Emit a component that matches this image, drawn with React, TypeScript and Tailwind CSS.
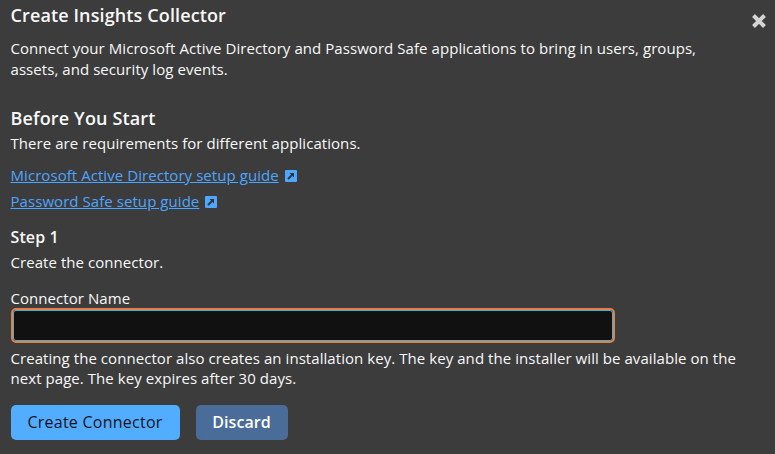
export default function App() {
  return (
    <div className="relative w-[775px] h-[454px] overflow-hidden bg-[#3c3c3c] px-[10.5px] text-[#f8f8f8] text-[15px] leading-[21px] tracking-[0.06px] font-['Open_Sans',sans-serif]">
      <svg className="absolute left-[751px] top-[13px]" width="16" height="16" viewBox="0 0 16 16">
        <path d="M2.5 2.5 L13.5 13.5 M13.5 2.5 L2.5 13.5" stroke="#d4d4d4" strokeWidth="4" />
      </svg>
      <h1 className="pt-[3px] text-[18px] leading-[24px] font-semibold tracking-[0.12px]">Create Insights Collector</h1>
      <p className="mt-[11px] w-[730px]">
        Connect your Microsoft Active Directory and Password Safe applications to bring in users, groups, assets, and security log events.
      </p>
      <h2 className="mt-[26px] text-[18px] leading-[24px] font-semibold tracking-[0.15px]">Before You Start</h2>
      <p className="mt-[3px]">There are requirements for different applications.</p>
      <div className="mt-[11px] flex items-center gap-[6px] text-[#4da6ff]">
        <a className="underline">Microsoft Active Directory setup guide</a>
        <ExtIcon />
      </div>
      <div className="mt-[5px] flex items-center gap-[6px] text-[#4da6ff]">
        <a className="underline">Password Safe setup guide</a>
        <ExtIcon />
      </div>
      <h3 className="mt-[14px] text-[16px] leading-[22px] font-semibold tracking-[0.1px]">Step 1</h3>
      <p className="mt-[4px]">Create the connector.</p>
      <label className="block mt-[15px]">Connector Name</label>
      <div className="w-[604px] h-[35px] -mt-[1px] rounded-[5px] border-2 border-[#e67e45] bg-[#111111] shadow-[inset_0_0_0_1px_#3fb4d8]" />
      <p className="mt-[5px] w-[730px] leading-[20px]">
        Creating the connector also creates an installation key. The key and the installer will be available on the next page. The key expires after 30 days.
      </p>
      <div className="mt-[17px] flex gap-[16px]">
        <button className="w-[169px] h-[35px] rounded-[5px] bg-[#52acff] text-[#10141a] text-[16px] tracking-[0.25px]">Create Connector</button>
        <button className="w-[92px] h-[35px] rounded-[5px] bg-[#4a6c99] text-white text-[16px] font-semibold">Discard</button>
      </div>
    </div>
  );
}

function ExtIcon() {
  return (
    <svg width="12" height="12" viewBox="0 0 12 12" className="shrink-0">
      <rect width="12" height="12" rx="1" fill="#4da6ff" />
      <path d="M3 9 L7.5 4.5" stroke="#333" strokeWidth="1.8" fill="none" />
      <path d="M4.5 3 H9 V7.5 Z" fill="#333" />
    </svg>
  );
}
